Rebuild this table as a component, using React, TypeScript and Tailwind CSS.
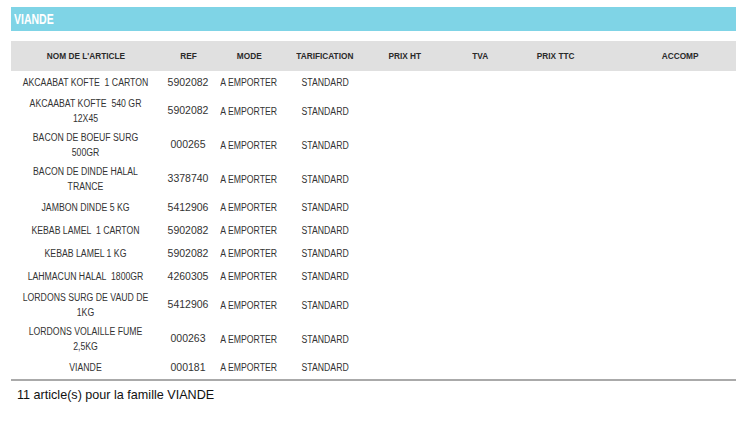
import React from "react";

const rows: { name: string; ref: string }[] = [
  { name: "AKCAABAT KOFTE  1 CARTON", ref: "5902082" },
  { name: "AKCAABAT KOFTE  540 GR 12X45", ref: "5902082" },
  { name: "BACON DE BOEUF SURG 500GR", ref: "000265" },
  { name: "BACON DE DINDE HALAL TRANCE", ref: "3378740" },
  { name: "JAMBON DINDE 5 KG", ref: "5412906" },
  { name: "KEBAB LAMEL  1 CARTON", ref: "5902082" },
  { name: "KEBAB LAMEL 1 KG", ref: "5902082" },
  { name: "LAHMACUN HALAL  1800GR", ref: "4260305" },
  { name: "LORDONS SURG DE VAUD DE 1KG", ref: "5412906" },
  { name: "LORDONS VOLAILLE FUME 2,5KG", ref: "000263" },
  { name: "VIANDE", ref: "000181" },
];

const headers = [
  "NOM DE L'ARTICLE",
  "REF",
  "MODE",
  "TARIFICATION",
  "PRIX HT",
  "TVA",
  "PRIX TTC",
  "ACCOMP",
];

export default function App() {
  return (
    <div className="w-[750px] h-[425px] bg-white pt-[7px] px-[11px] font-['Liberation_Sans',Arial,sans-serif] text-[#333]">
      <div className="w-[725px] h-[24px] bg-[#7fd4e6] flex items-center pl-[3px]">
        <span className="inline-block origin-left scale-x-75 text-white font-bold text-[14px] leading-none">
          VIANDE
        </span>
      </div>
      <div className="mt-[10px] w-[725px] grid grid-cols-[149px_56px_66px_86px_74px_76px_76px_142px]">
        {headers.map((h, i) => (
          <div
            key={h}
            className={
              "h-[30px] bg-[#e0e0e0] flex items-center justify-center " +
              (i === 7 ? "pl-[30px]" : "")
            }
          >
            <span className="inline-block scale-x-[0.87] text-[9.5px] font-bold text-[#2a2a2a] whitespace-nowrap">
              {h}
            </span>
          </div>
        ))}
        {rows.map((r, idx) => (
          <React.Fragment key={idx}>
            <div className="min-h-[23px] py-[2px] flex items-center justify-center">
              <div className="w-[153px] shrink-0 scale-x-[0.87] text-center text-[10px] leading-[15px] whitespace-pre-wrap">
                {r.name}
              </div>
            </div>
            <div className="min-h-[23px] flex items-center justify-center text-[10.5px]">
              {r.ref}
            </div>
            <div className="min-h-[23px] flex items-center justify-center">
              <span className="inline-block scale-x-[0.87] text-[10px] whitespace-nowrap">
                A EMPORTER
              </span>
            </div>
            <div className="min-h-[23px] flex items-center justify-center">
              <span className="inline-block scale-x-[0.87] text-[10px] whitespace-nowrap">
                STANDARD
              </span>
            </div>
            <div />
            <div />
            <div />
            <div />
          </React.Fragment>
        ))}
      </div>
      <div className="w-[725px] h-[1.5px] bg-[#aaaaaa]" />
      <div className="mt-[6px] pl-[6px] text-[12.6px] leading-[16px] text-[#111]">
        11 article(s) pour la famille VIANDE
      </div>
    </div>
  );
}
